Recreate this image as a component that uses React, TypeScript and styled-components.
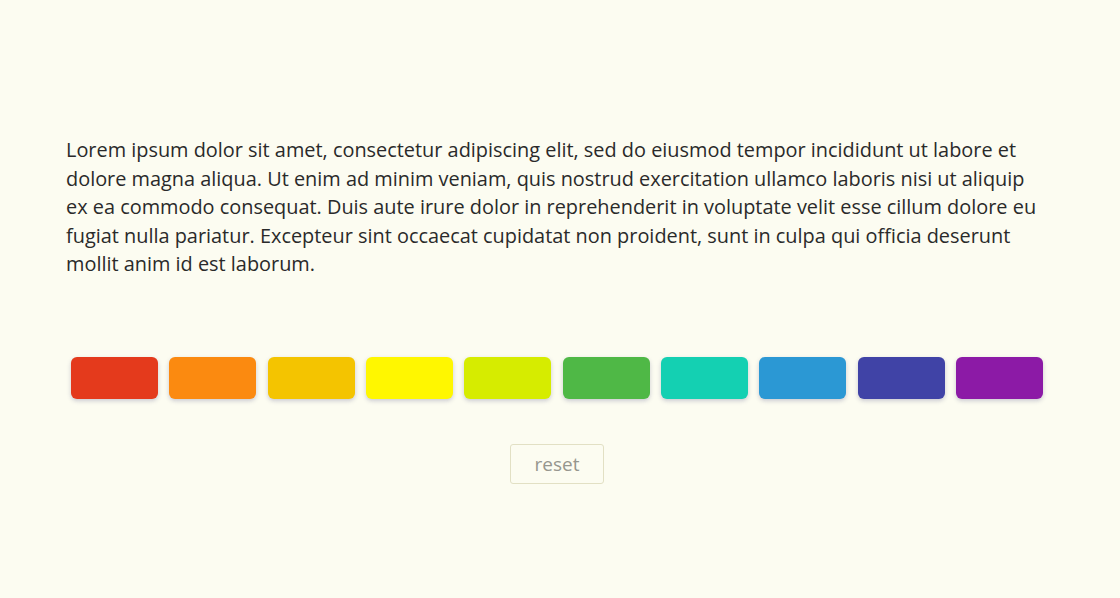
import React from "react";
import styled, { createGlobalStyle } from "styled-components";

const Global = createGlobalStyle`
  html, body { margin: 0; padding: 0; background: #fcfcf1; }
  body { font-family: "Open Sans", "Lato", sans-serif; }
`;

const Page = styled.div`
  width: 1120px;
  height: 598px;
  box-sizing: border-box;
  padding: 136px 0 0 66px;
`;

const Container = styled.div`
  width: 982px;
  display: flex;
  flex-direction: column;
  align-items: center;
`;

const Paragraph = styled.p`
  margin: 0;
  align-self: stretch;
  font-size: 19.9px;
  line-height: 28.5px;
  color: #2a2a2a;
`;

const Swatches = styled.div`
  margin-top: 78px;
  display: flex;
  gap: 11.4px;
`;

const Swatch = styled.div<{ $color: string }>`
  width: 87px;
  height: 42px;
  flex-shrink: 0;
  border-radius: 6px;
  background: ${(p) => p.$color};
  box-shadow: 0 2px 4px rgba(60, 60, 120, 0.25);
`;

const ResetButton = styled.button`
  margin-top: 45px;
  width: 94px;
  height: 40px;
  background: transparent;
  border: 1px solid #e2e0c4;
  border-radius: 3px;
  font-family: "Open Sans", sans-serif;
  font-size: 19px;
  font-weight: 500;
  color: #96968e;
  cursor: pointer;
`;

const colors = [
  "#e43a1c",
  "#fb8a10",
  "#f4c400",
  "#fff700",
  "#d6ec00",
  "#4fb846",
  "#14d0b2",
  "#2b98d4",
  "#4043a6",
  "#8c1aa6",
];

export default function App() {
  return (
    <>
      <Global />
      <Page>
        <Container>
          <Paragraph>
            Lorem ipsum dolor sit amet, consectetur adipiscing elit, sed do eiusmod tempor incididunt ut labore et
            dolore magna aliqua. Ut enim ad minim veniam, quis nostrud exercitation ullamco laboris nisi ut aliquip
            ex ea commodo consequat. Duis aute irure dolor in reprehenderit in voluptate velit esse cillum dolore eu
            fugiat nulla pariatur. Excepteur sint occaecat cupidatat non proident, sunt in culpa qui officia deserunt
            mollit anim id est laborum.
          </Paragraph>
          <Swatches>
            {colors.map((c) => (
              <Swatch key={c} $color={c} />
            ))}
          </Swatches>
          <ResetButton>reset</ResetButton>
        </Container>
      </Page>
    </>
  );
}
